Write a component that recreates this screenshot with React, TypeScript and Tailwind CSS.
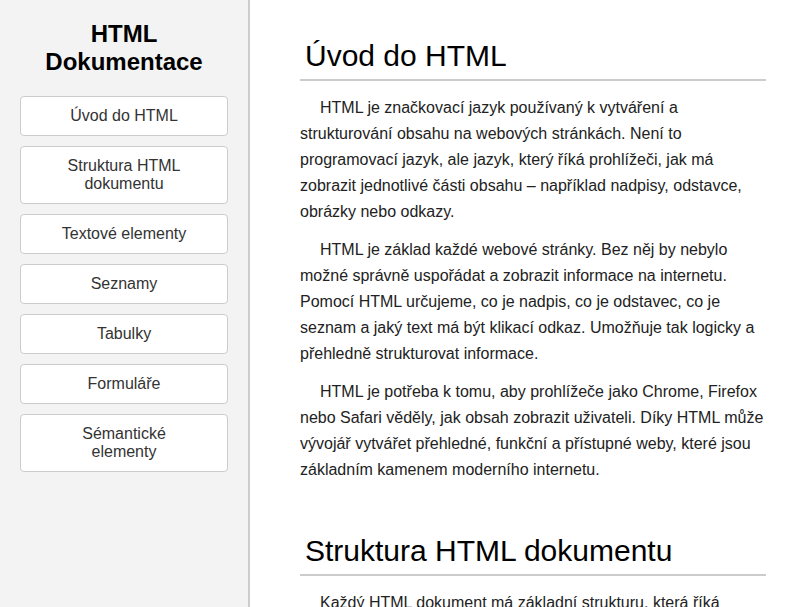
const links = [
  "Úvod do HTML",
  "Struktura HTML dokumentu",
  "Textové elementy",
  "Seznamy",
  "Tabulky",
  "Formuláře",
  "Sémantické elementy",
];

const App = () => {
  return (
    <div
      className="flex h-[607px] overflow-hidden bg-white"
      style={{ fontFamily: '"Liberation Sans", Arial, sans-serif' }}
    >
      <aside className="w-[250px] shrink-0 border-r-2 border-[#cccccc] bg-[#f3f3f3] px-5 pt-[20px]">
        <h1 className="text-center text-[24px] font-bold leading-[28px] text-black">
          HTML
          <br />
          Dokumentace
        </h1>
        <nav className="mt-[20px] flex flex-col gap-[10px]">
          {links.map((l) => (
            <div
              key={l}
              className="flex min-h-[40px] items-center justify-center rounded border border-[#cccccc] bg-white px-[40px] py-[10px] text-center text-[16px] leading-[18px] text-[#333333]"
            >
              {l}
            </div>
          ))}
        </nav>
      </aside>
      <main className="flex-1 pl-[50px] pr-[31px] pt-[38px] text-[16px] leading-[26px] text-[#222222]">
        <h2 className="border-b-2 border-[#cccccc] pb-[5px] pl-[5px] text-[30px] leading-[36px] text-black">
          Úvod do HTML
        </h2>
        <div className="mt-[14px] space-y-[12px]">
          <p className="indent-[20px]">
            HTML je značkovací jazyk používaný k vytváření a strukturování obsahu na webových stránkách. Není to programovací jazyk, ale jazyk, který říká prohlížeči, jak má zobrazit jednotlivé části obsahu – například nadpisy, odstavce, obrázky nebo odkazy.
          </p>
          <p className="indent-[20px]">
            HTML je základ každé webové stránky. Bez něj by nebylo možné správně uspořádat a zobrazit informace na internetu. Pomocí HTML určujeme, co je nadpis, co je odstavec, co je seznam a jaký text má být klikací odkaz. Umožňuje tak logicky a přehledně strukturovat informace.
          </p>
          <p className="indent-[20px]">
            HTML je potřeba k tomu, aby prohlížeče jako Chrome, Firefox nebo Safari věděly, jak obsah zobrazit uživateli. Díky HTML může vývojář vytvářet přehledné, funkční a přístupné weby, které jsou základním kamenem moderního internetu.
          </p>
        </div>
        <h2 className="mt-[50px] border-b-2 border-[#cccccc] pb-[5px] pl-[5px] text-[30px] leading-[36px] text-black">
          Struktura HTML dokumentu
        </h2>
        <div className="mt-[14px]">
          <p className="indent-[20px]">
            Každý HTML dokument má základní strukturu, která říká prohlížeči, jak má stránku zpracovat.
          </p>
        </div>
      </main>
    </div>
  );
};

export default App;
